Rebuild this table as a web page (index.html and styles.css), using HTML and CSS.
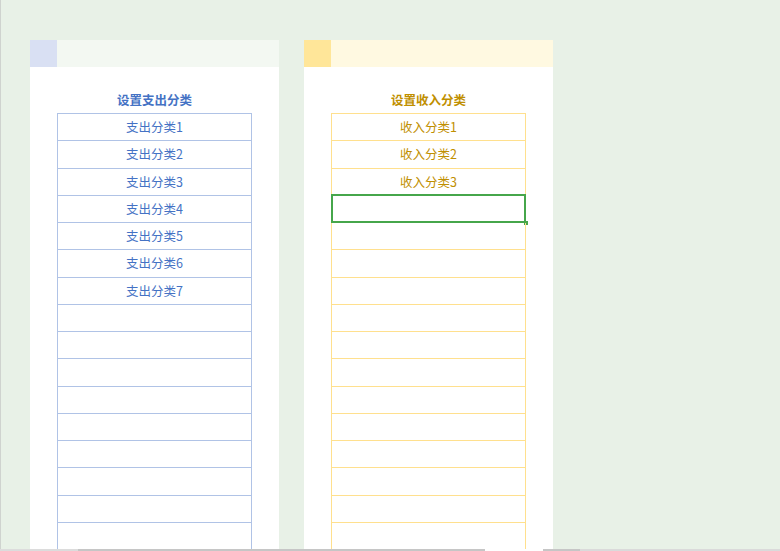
FILE: index.html
```html
<!DOCTYPE html>
<html lang="zh">
<head>
<meta charset="utf-8">
<title>分类设置</title>
<link rel="stylesheet" href="styles.css">
</head>
<body>
<div class="screen">
  <div class="sheet">
    <section class="panel panel-exp">
      <div class="panel-head"><span class="swatch"></span></div>
      <div class="panel-body">
        <h2 class="title">设置支出分类</h2>
        <div class="table">
          <div class="row">支出分类1</div>
          <div class="row">支出分类2</div>
          <div class="row">支出分类3</div>
          <div class="row">支出分类4</div>
          <div class="row">支出分类5</div>
          <div class="row">支出分类6</div>
          <div class="row">支出分类7</div>
          <div class="row"></div>
          <div class="row"></div>
          <div class="row"></div>
          <div class="row"></div>
          <div class="row"></div>
          <div class="row"></div>
          <div class="row"></div>
          <div class="row"></div>
          <div class="row"></div>
          <div class="row"></div>
        </div>
      </div>
    </section>
    <section class="panel panel-inc">
      <div class="panel-head"><span class="swatch"></span></div>
      <div class="panel-body">
        <h2 class="title">设置收入分类</h2>
        <div class="table">
          <div class="row">收入分类1</div>
          <div class="row">收入分类2</div>
          <div class="row">收入分类3</div>
          <div class="row selected"><span class="sel-box"></span><span class="sel-handle"></span></div>
          <div class="row"></div>
          <div class="row"></div>
          <div class="row"></div>
          <div class="row"></div>
          <div class="row"></div>
          <div class="row"></div>
          <div class="row"></div>
          <div class="row"></div>
          <div class="row"></div>
          <div class="row"></div>
          <div class="row"></div>
          <div class="row"></div>
          <div class="row"></div>
        </div>
      </div>
    </section>
  </div>
  <div class="hscroll">
    <span class="hs hs-a"></span>
    <span class="hs hs-b"></span>
    <span class="hs hs-c"></span>
    <span class="hs hs-d"></span>
    <span class="hs hs-e"></span>
  </div>
</div>
</body>
</html>
```
FILE: styles.css
```css
* { box-sizing: border-box; }
html, body { margin: 0; padding: 0; }
body {
  width: 780px;
  height: 551px;
  overflow: hidden;
  background: #e8f1e7;
  font-family: "Noto Sans CJK SC", "Noto Sans", sans-serif;
}
.screen {
  width: 780px;
  height: 551px;
  display: flex;
  flex-direction: column;
  border-left: 1px solid #cfd3cf;
}
.sheet {
  flex: 1;
  min-height: 0;
  overflow: hidden;
  display: flex;
  align-items: flex-start;
  gap: 25px;
  padding: 40px 0 0 29px;
}
.panel {
  width: 249px;
  height: 600px;
  background: #ffffff;
  flex: none;
}
.panel-head {
  height: 27px;
  display: flex;
}
.swatch { width: 27px; height: 27px; }
.panel-exp .panel-head { background: #f3f8f2; }
.panel-exp .swatch { background: #d9e0f3; }
.panel-inc .panel-head { background: #fff9e1; }
.panel-inc .swatch { background: #ffe699; }

.panel-body {
  padding: 24px 0 0 27px;
}
.title {
  margin: 0 0 4px;
  width: 195px;
  text-align: center;
  font-size: 12.5px;
  line-height: 18px;
  font-weight: bold;
}
.panel-exp .title { color: #4472c4; }
.panel-inc .title { color: #bf8f00; }

.table {
  width: 195px;
  border-top: 1px solid;
}
.row {
  position: relative;
  height: 27.27px;
  border-left: 1px solid;
  border-right: 1px solid;
  border-bottom: 1px solid;
  display: flex;
  align-items: center;
  justify-content: center;
  font-size: 12.5px;
  line-height: 16px;
}
.panel-exp .table, .panel-exp .row { border-color: #b0c3e6; }
.panel-exp .row { color: #4472c4; }
.panel-inc .table, .panel-inc .row { border-color: #ffe08e; }
.panel-inc .row { color: #bf8f00; }

.sel-box {
  position: absolute;
  left: -1px;
  right: -1px;
  top: -2px;
  bottom: -1px;
  border: 2px solid #46a64b;
}
.sel-handle {
  position: absolute;
  right: -3px;
  bottom: -3px;
  width: 4px;
  height: 4px;
  background: #46a64b;
}

.hscroll {
  height: 2px;
  flex: none;
  display: flex;
  margin-left: -1px;
}
.hs { height: 2px; display: block; }
.hs-a { width: 78px; background: #dcdcdc; }
.hs-b { width: 407px; background: #c6c6c6; }
.hs-c { width: 58px; background: #ffffff; }
.hs-d { width: 37px; background: #c6c6c6; }
.hs-e { flex: 1; background: #dadada; }
```
